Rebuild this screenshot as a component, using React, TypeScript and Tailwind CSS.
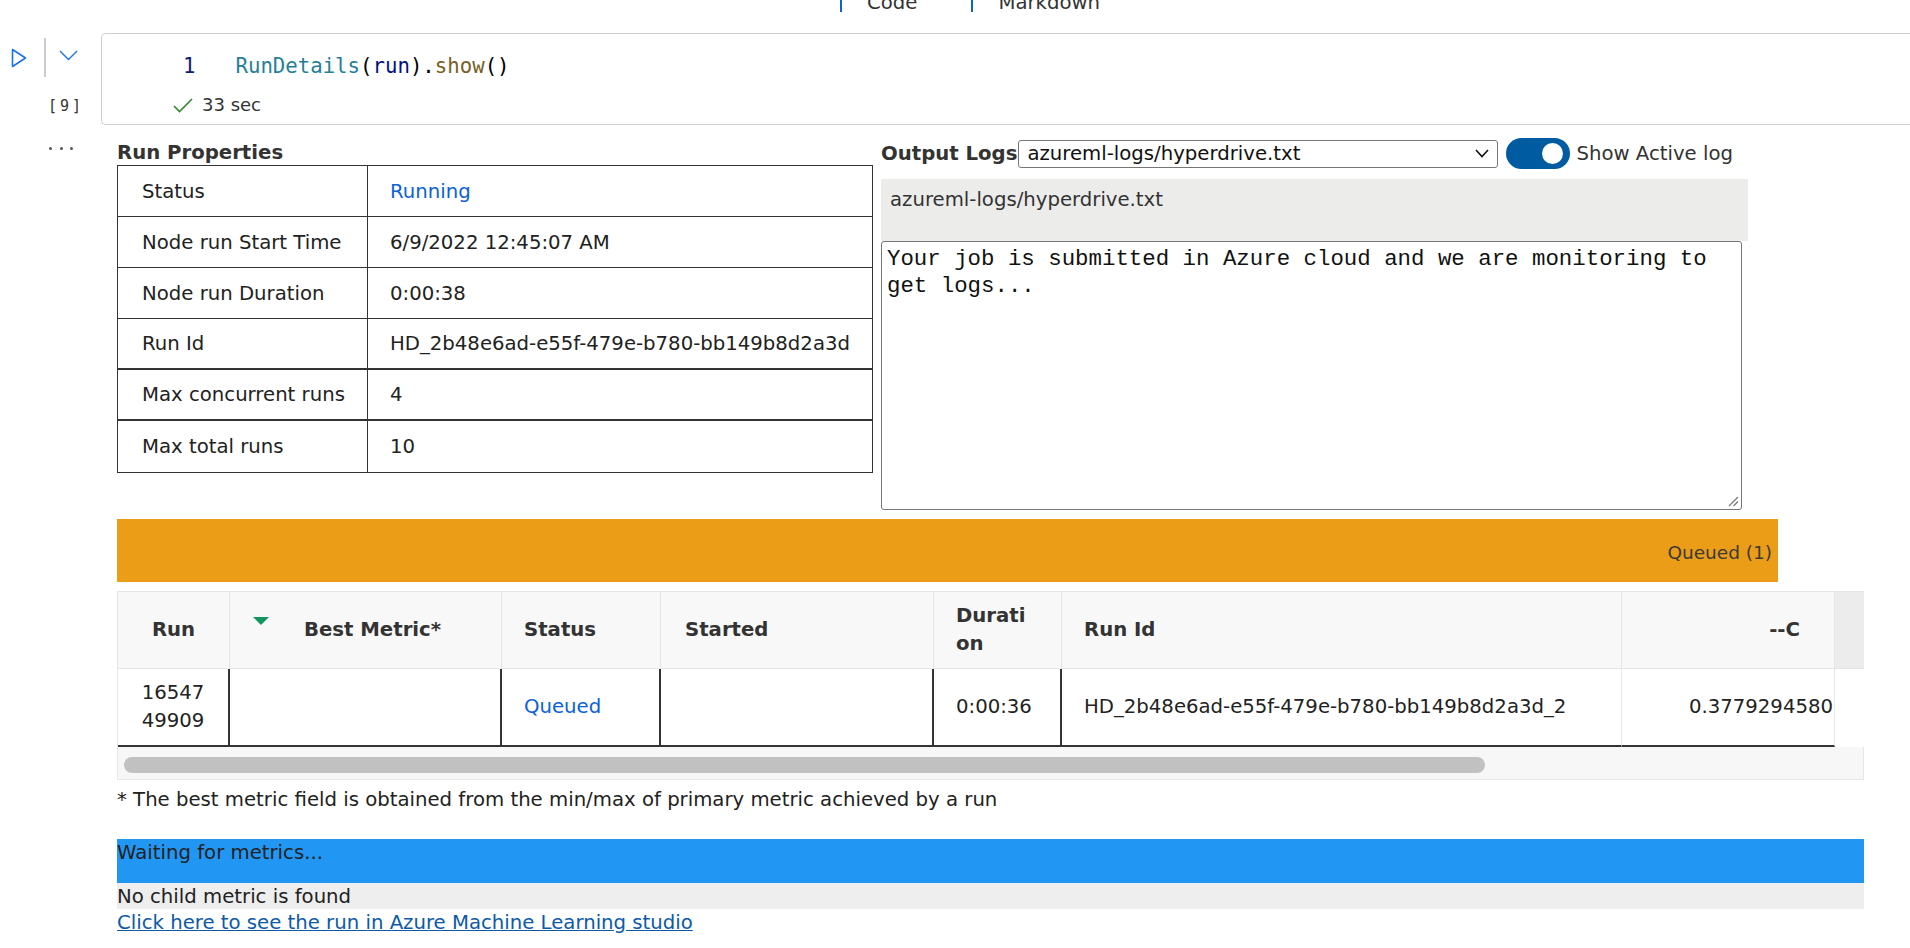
import React from "react";

const props: [string, string, boolean?][] = [
  ["Status", "Running", true],
  ["Node run Start Time", "6/9/2022 12:45:07 AM"],
  ["Node run Duration", "0:00:38"],
  ["Run Id", "HD_2b48e6ad-e55f-479e-b780-bb149b8d2a3d"],
  ["Max concurrent runs", "4"],
  ["Max total runs", "10"],
];

export default function App() {
  return (
    <div className="w-[1910px] h-[948px] overflow-hidden bg-white font-['DejaVu_Sans',sans-serif] text-[19.7px] text-[#333] flex flex-col">
      {/* top toolbar strip */}
      <div className="h-[33px] overflow-hidden flex items-start pl-[840px]">
        <div className="w-[2px] h-[12px] bg-[#0b63ce]" />
        <div className="ml-[25px] -mt-[9px] leading-[24px]">Code</div>
        <div className="ml-[54px] w-[2px] h-[12px] bg-[#0b63ce]" />
        <div className="ml-[25px] -mt-[9px] leading-[24px]">Markdown</div>
      </div>

      {/* code cell */}
      <div className="flex h-[92px]">
        <div className="w-[101px] flex flex-col">
          <div className="flex items-center h-[39px] mt-[5px]">
            <svg className="ml-[11px]" width="16" height="20" viewBox="0 0 16 20">
              <path d="M1.5 1.5 L14.5 10 L1.5 18.5 Z" fill="none" stroke="#1a73e8" strokeWidth="1.6" strokeLinejoin="round" />
            </svg>
            <div className="ml-[17px] w-[2px] h-[39px] bg-[#cccccc]" />
            <svg className="ml-[13px] -mt-[5px]" width="19" height="11" viewBox="0 0 19 11">
              <path d="M1 1 L9.5 9.5 L18 1" fill="none" stroke="#1a73e8" strokeWidth="1.4" />
            </svg>
          </div>
          <div className="ml-[48px] mt-[20px] font-['DejaVu_Sans_Mono',monospace] text-[15px] leading-[18px] tracking-[3px] text-[#333]">
            [9]
          </div>
        </div>
        <div className="flex-1 border-t border-b border-l border-[#cfcfcf] rounded-l-[5px] flex flex-col">
          <div className="pt-[20px] flex font-['DejaVu_Sans_Mono',monospace] text-[20.7px] leading-[24px]">
            <span className="ml-[81px] text-[#0b216f]">1</span>
            <span className="ml-[40px]">
              <span className="text-[#267f99]">RunDetails</span>
              <span className="text-[#000]">(</span>
              <span className="text-[#001080]">run</span>
              <span className="text-[#000]">).</span>
              <span className="text-[#795e26]">show</span>
              <span className="text-[#000]">()</span>
            </span>
          </div>
          <div className="mt-[15px] flex items-center h-[24px] ml-[71px]">
            <svg width="20" height="15" viewBox="0 0 20 15">
              <path d="M1 8 L6.5 13.5 L19 1" fill="none" stroke="#388a34" strokeWidth="1.7" />
            </svg>
            <span className="ml-[9px] text-[18px] leading-[24px] text-[#333]">33 sec</span>
          </div>
        </div>
      </div>

      {/* output area */}
      <div className="flex">
        <div className="w-[117px] pt-[22px] pl-[49px]">
          <div className="flex gap-[7.5px]">
            <div className="w-[3px] h-[3px] rounded-full bg-[#555]" />
            <div className="w-[3px] h-[3px] rounded-full bg-[#555]" />
            <div className="w-[3px] h-[3px] rounded-full bg-[#555]" />
          </div>
        </div>
        <div className="w-[1747px] pt-[14px] flex flex-col">
          <div className="flex">
            {/* Run properties */}
            <div className="w-[756px]">
              <div className="mt-[2px] font-bold leading-[24px] text-[#333]">Run Properties</div>
              <div className="border border-[#333] text-[#222]">
                {props.map(([k, v, blue], i) => (
                  <div
                    key={k}
                    className={
                      "flex h-[51px] items-center " +
                      (i < 5 ? (i >= 3 ? "border-b-2 border-[#333]" : "border-b border-[#333]") : "")
                    }
                  >
                    <div className="w-[250px] h-full flex items-center pl-[24px] pt-[1px] border-r border-[#333]">{k}</div>
                    <div className={"pl-[22px] pt-[1px] " + (blue ? "text-[#0b62d6]" : "")}>{v}</div>
                  </div>
                ))}
              </div>
            </div>

            {/* output logs */}
            <div className="ml-[8px] w-[867px] flex flex-col">
              <div className="flex items-center h-[31px] -mt-[1px]">
                <span className="font-bold text-[#333] leading-[24px]">Output Logs</span>
                <div className="ml-[1px] w-[480px] h-[28px] border border-[#767676] rounded-[3px] flex items-center pl-[8px] pr-[8px] text-[#111]">
                  <span className="flex-1">azureml-logs/hyperdrive.txt</span>
                  <svg width="14" height="9" viewBox="0 0 14 9">
                    <path d="M1 1 L7 7.5 L13 1" fill="none" stroke="#111" strokeWidth="1.6" />
                  </svg>
                </div>
                <div className="ml-[8px] w-[64px] h-[31px] rounded-full bg-[#005ba1] flex items-center justify-end pr-[7px]">
                  <div className="w-[21px] h-[21px] rounded-full bg-white" />
                </div>
                <span className="ml-[6px] text-[#333]">Show Active log</span>
              </div>
              <div className="mt-[10px] h-[62px] bg-[#ececeb] pl-[9px] pt-[9px] leading-[24px] text-[#333]">
                azureml-logs/hyperdrive.txt
              </div>
              <div className="relative w-[861px] h-[269px] border border-[#767676] rounded-[3px] pl-[5px] pt-[4px] font-['Liberation_Mono',monospace] text-[22.4px] leading-[27px] text-[#111] whitespace-pre">
                {"Your job is submitted in Azure cloud and we are monitoring to\nget logs..."}
                <svg className="absolute right-[2px] bottom-[2px]" width="12" height="12" viewBox="0 0 12 12">
                  <path d="M11 2 L2 11 M11 6.5 L6.5 11" stroke="#777" strokeWidth="1.2" />
                </svg>
              </div>
            </div>
          </div>

          {/* orange bar */}
          <div className="mt-[9px] w-[1661px] h-[63px] bg-[#ec9d17] flex justify-end pr-[6px] pt-[22px]">
            <span className="text-[18.5px] leading-[24px] text-[#3a3a3a]">Queued (1)</span>
          </div>

          {/* grid */}
          <div className="mt-[9px] border border-[#e6e6e6] w-[1747px]">
            <div className="grid grid-cols-[112px_272px_159px_273px_128px_560px_213px_29px] h-[77px] bg-[#f8f8f8] font-bold text-[#333] border-b border-[#e6e6e6]">
              <div className="flex items-center justify-center border-r border-[#e6e6e6]">Run</div>
              <div className="relative flex items-center justify-center border-r border-[#e6e6e6] pl-[14px]">
                <svg className="absolute left-[23px] top-[25px]" width="16" height="8" viewBox="0 0 16 8">
                  <path d="M0 0 L16 0 L8 8 Z" fill="#13955f" />
                </svg>
                Best Metric*
              </div>
              <div className="flex items-center pl-[22px] border-r border-[#e6e6e6]">Status</div>
              <div className="flex items-center pl-[24px] border-r border-[#e6e6e6]">Started</div>
              <div className="flex items-center pl-[22px] border-r border-[#e6e6e6] leading-[28px]">
                <span>
                  Durati
                  <br />
                  on
                </span>
              </div>
              <div className="flex items-center pl-[22px] border-r border-[#e6e6e6]">Run Id</div>
              <div className="flex items-center justify-end pr-[34px] border-r border-[#e6e6e6]">--C</div>
              <div className="bg-[#ececec]" />
            </div>
            <div className="grid grid-cols-[112px_272px_159px_273px_128px_560px_213px_29px] h-[78px] text-[#222]">
              <div className="flex items-center justify-center text-center leading-[28px] border-r-2 border-b-2 border-[#333]">
                <span>
                  16547
                  <br />
                  49909
                </span>
              </div>
              <div className="border-r-2 border-b-2 border-[#333]" />
              <div className="flex items-center pl-[22px] text-[#0b62d6] border-r-2 border-b-2 border-[#333]">Queued</div>
              <div className="border-r-2 border-b-2 border-[#333]" />
              <div className="flex items-center pl-[22px] border-r-2 border-b-2 border-[#333]">0:00:36</div>
              <div className="flex items-center pl-[22px] border-r border-b-2 border-[#333] border-r-[#e6e6e6]">
                HD_2b48e6ad-e55f-479e-b780-bb149b8d2a3d_2
              </div>
              <div className="flex items-center justify-end pr-[1px] whitespace-nowrap border-r border-b-2 border-[#333] border-r-[#e6e6e6]">
                0.3779294580
              </div>
              <div className="bg-white" />
            </div>
            <div className="h-[32px] bg-[#f7f7f7] pt-[10px] pl-[6px]">
              <div className="w-[1361px] h-[16px] rounded-full bg-[#c1c1c1]" />
            </div>
          </div>

          <div className="mt-[8px] leading-[24px] text-[#222]">
            * The best metric field is obtained from the min/max of primary metric achieved by a run
          </div>

          <div className="mt-[27px] h-[44px] bg-[#2196f3] pt-[2px] leading-[24px] text-[#222]">
            Waiting for metrics...
          </div>
          <div className="h-[26px] bg-[#eeeeee] pt-[2px] leading-[24px] text-[#222]">No child metric is found</div>
          <div className="mt-[1px] leading-[26px]">
            <a href="#" className="text-[#0d5aa7] underline">
              Click here to see the run in Azure Machine Learning studio
            </a>
          </div>
        </div>
      </div>
    </div>
  );
}
